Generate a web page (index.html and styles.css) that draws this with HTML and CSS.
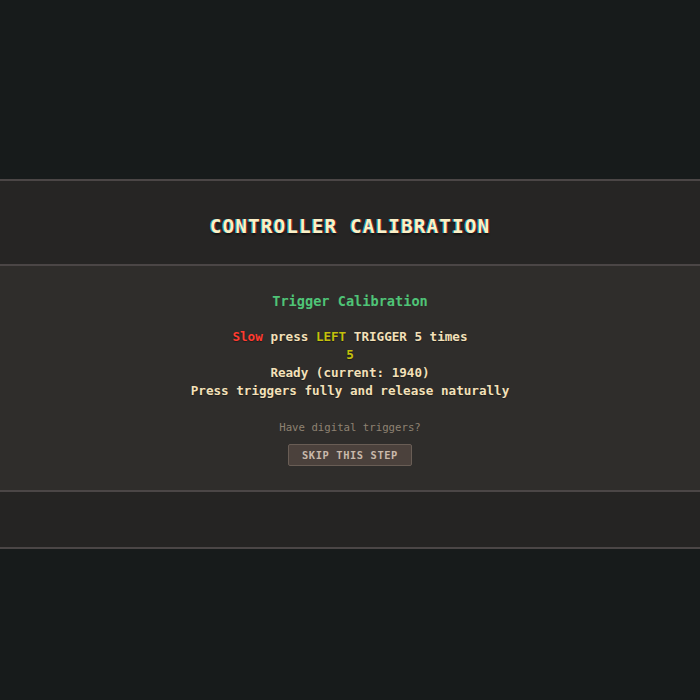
FILE: index.html
```html
<!DOCTYPE html>
<html lang="en">
<head>
<meta charset="utf-8">
<title>Controller Calibration</title>
<link rel="stylesheet" href="styles.css">
</head>
<body>
  <div class="panel">
    <header class="panel-head">
      <h1 class="title">CONTROLLER CALIBRATION</h1>
    </header>
    <main class="panel-body">
      <h2 class="step-title">Trigger Calibration</h2>
      <p class="line"><span class="red">Slow</span> press <span class="yellow">LEFT</span> TRIGGER 5 times</p>
      <p class="line yellow">5</p>
      <p class="line">Ready (current: 1940)</p>
      <p class="line">Press triggers fully and release naturally</p>
      <p class="hint">Have digital triggers?</p>
      <button class="skip">SKIP THIS STEP</button>
    </main>
    <footer class="panel-foot"></footer>
  </div>
</body>
</html>
```
FILE: styles.css
```css
html, body {
  margin: 0;
  padding: 0;
  background: #171b1b;
  font-family: "DejaVu Sans Mono", monospace;
}

body {
  padding-top: 179px;
}

.panel {
  border-top: 2px solid #4b4646;
  border-bottom: 2px solid #4b4646;
}

.panel-head {
  box-sizing: border-box;
  height: 85px;
  padding-top: 8px;
  background: #262524;
  border-bottom: 2px solid #4b4646;
  display: flex;
  align-items: center;
  justify-content: center;
}

.title {
  margin: 0;
  font-size: 19.5px;
  font-weight: bold;
  color: #fbefc6;
  letter-spacing: 1px;
  text-shadow: -1px 0 rgba(0, 220, 255, 0.7), 1px 0 rgba(255, 40, 40, 0.5), 0 2px 2px rgba(0, 0, 0, 0.5);
}

.panel-body {
  background: #2f2d2b;
  padding: 26px 0 24px;
  text-align: center;
  border-bottom: 2px solid #4b4646;
  display: flex;
  flex-direction: column;
  align-items: center;
}

.step-title {
  margin: 0 0 18px;
  font-size: 13.6px;
  line-height: 18px;
  font-weight: bold;
  color: #4fc477;
}

.line {
  margin: 0;
  font-size: 12.6px;
  line-height: 18px;
  font-weight: bold;
  color: #f3e0b9;
  text-shadow: 0 1px 1px rgba(0, 0, 0, 0.4);
}

.red { color: #ff3b30; }
.yellow { color: #c4c00c; }

.hint {
  margin: 21px 0 0;
  font-size: 10.7px;
  line-height: 14px;
  color: #8e8272;
}

.skip {
  margin-top: 9px;
  height: 22px;
  width: 124px;
  padding: 0;
  background: #4b413c;
  border: 1px solid #695d55;
  border-radius: 2px;
  color: #c9b9ab;
  font-family: "DejaVu Sans Mono", monospace;
  font-size: 10.4px;
  font-weight: bold;
  letter-spacing: 0.6px;
}

.panel-foot {
  height: 55px;
  background: #252423;
}
```
